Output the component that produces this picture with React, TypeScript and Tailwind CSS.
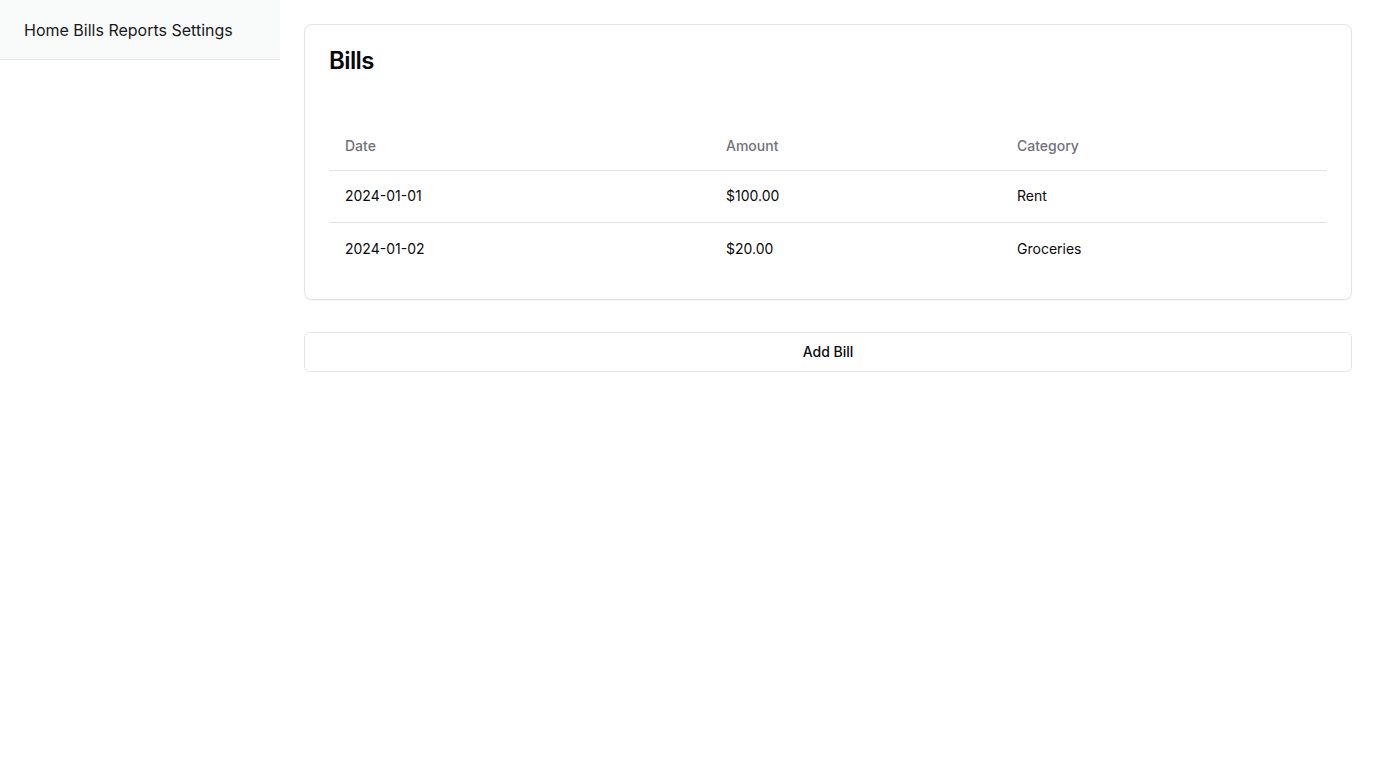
import React from "react";

const rows = [
  { date: "2024-01-01", amount: "$100.00", category: "Rent" },
  { date: "2024-01-02", amount: "$20.00", category: "Groceries" },
];

export default function App() {
  return (
    <div
      className="flex min-h-screen bg-white text-[#09090b]"
      style={{ fontFamily: "Inter, 'Noto Sans', sans-serif" }}
    >
      <aside className="w-[280px] shrink-0">
        <nav className="h-[60px] bg-[#f9fafa] border-b border-[#e4e4e7] px-6 flex items-center text-base text-[#18181b]">
          <span>Home</span>&nbsp;<span>Bills</span>&nbsp;<span>Reports</span>&nbsp;<span>Settings</span>
        </nav>
      </aside>
      <main className="flex-1 p-6">
        <div className="rounded-lg border border-[#e4e4e7] bg-white p-6 shadow-[0_1px_2px_rgba(0,0,0,0.05)]">
          <h2 className="text-2xl font-semibold leading-6 tracking-tight">Bills</h2>
          <table className="mt-[49px] w-full table-fixed text-sm">
            <colgroup>
              <col className="w-[381px]" />
              <col className="w-[291px]" />
              <col />
            </colgroup>
            <thead>
              <tr className="border-b border-[#e4e4e7]">
                <th className="h-12 px-4 text-left font-medium text-[#71717a]">Date</th>
                <th className="h-12 px-4 text-left font-medium text-[#71717a]">Amount</th>
                <th className="h-12 px-4 text-left font-medium text-[#71717a]">Category</th>
              </tr>
            </thead>
            <tbody>
              {rows.map((r, i) => {
                const last = i === rows.length - 1;
                const td = last ? "h-[53px] px-4" : "h-[52px] px-4";
                return (
                  <tr key={r.date} className={last ? "" : "border-b border-[#e4e4e7]"}>
                    <td className={td}>{r.date}</td>
                    <td className={td}>{r.amount}</td>
                    <td className={td}>{r.category}</td>
                  </tr>
                );
              })}
            </tbody>
          </table>
        </div>
        <button className="mt-8 h-10 w-full rounded-md border border-[#e4e4e7] bg-white text-sm font-medium text-[#09090b]">
          Add Bill
        </button>
      </main>
    </div>
  );
}
